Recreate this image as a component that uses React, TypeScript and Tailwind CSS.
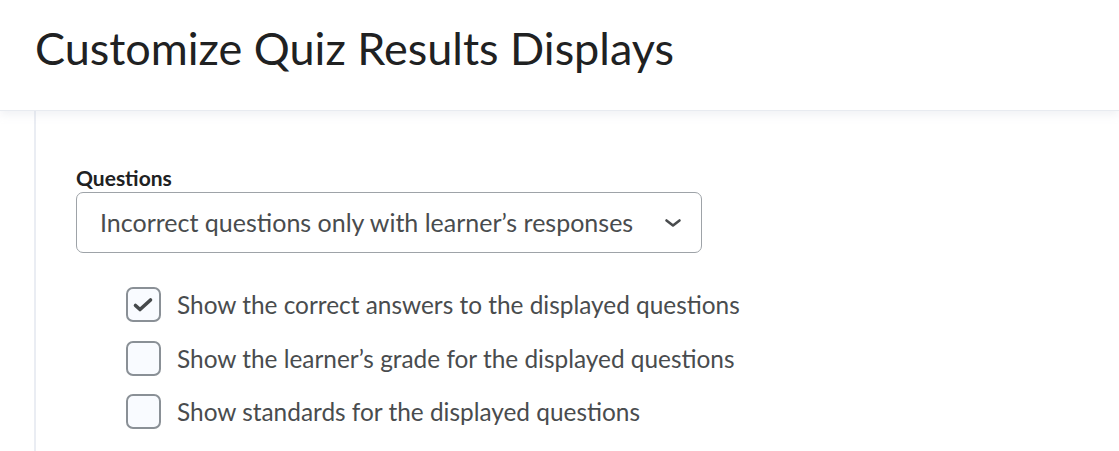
import React from "react";

function Check({ checked }: { checked?: boolean }) {
  return (
    <div className="w-[35px] h-[35px] rounded-[7px] border-2 border-[#8a9096] bg-[#f9fbff] flex items-center justify-center shrink-0">
      {checked && (
        <svg width="31" height="31" viewBox="0 0 31 31">
          <path d="M7.5 16.5 L12 20.5 L22.5 11" fill="none" stroke="#46494b" strokeWidth="3.6" strokeLinecap="round" strokeLinejoin="round" />
        </svg>
      )}
    </div>
  );
}

export default function App() {
  const items = [
    { label: "Show the correct answers to the displayed questions", checked: true },
    { label: "Show the learner\u2019s grade for the displayed questions", checked: false },
    { label: "Show standards for the displayed questions", checked: false },
  ];
  return (
    <div className="w-[1119px] h-[451px] bg-white overflow-hidden text-[#494c4e]" style={{ fontFamily: "Lato, 'Noto Sans', sans-serif" }}>
      <div className="h-[111px] border-b border-[#e8ebf0] flex items-start pl-[35px] pt-[21px] relative z-10 shadow-[0_4px_8px_rgba(200,205,215,0.25)]">
        <h1 className="text-[45px] leading-[54px] text-[#202122] font-normal">Customize Quiz Results Displays</h1>
      </div>
      <div className="ml-[34px] border-l-2 border-[#eaedf3] h-[340px] pl-[40px] pt-[54px]">
        <div className="text-[21px] leading-[26px] font-bold text-[#202122]">Questions</div>
        <div className="mt-[1px] w-[626px] h-[61px] border border-[#9ea3a8] rounded-[7px] flex items-center justify-between pl-[23px] pr-[19px]">
          <span className="text-[25px] text-[#494c4e]">Incorrect questions only with learner&rsquo;s responses</span>
          <svg width="18" height="10" viewBox="0 0 18 10">
            <path d="M2.5 2.5 L9 7.5 L15.5 2.5" fill="none" stroke="#494c4e" strokeWidth="2.6" strokeLinecap="round" strokeLinejoin="round" />
          </svg>
        </div>
        <div className="mt-[34px] pl-[50px] flex flex-col gap-[18.5px]">
          {items.map((it) => (
            <div key={it.label} className="flex items-center gap-[16px]">
              <Check checked={it.checked} />
              <span className="text-[24.4px] leading-[35px] text-[#494c4e]">{it.label}</span>
            </div>
          ))}
        </div>
      </div>
    </div>
  );
}
